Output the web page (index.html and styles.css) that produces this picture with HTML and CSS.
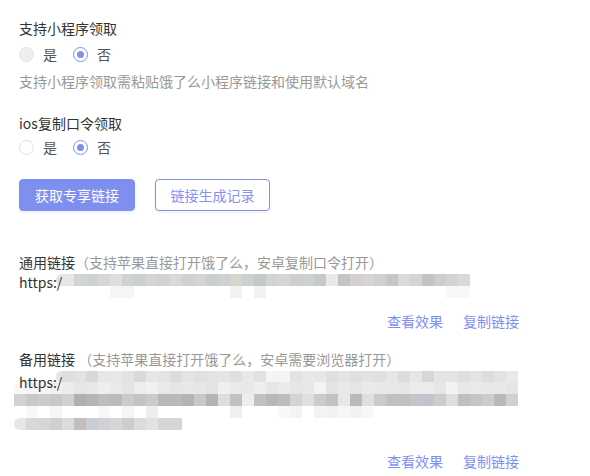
FILE: index.html
```html
<!DOCTYPE html>
<html lang="zh-CN">
<head>
    <meta charset="UTF-8">
    <meta name="viewport" content="width=device-width, initial-scale=1.0">
    <title>专享链接</title>
    <link rel="stylesheet" href="styles.css">
</head>
<body>
    <div class="page">
        <div class="field">
            <div class="field-label">支持小程序领取</div>
            <div class="radio-group">
                <label class="radio is-disabled"><span class="radio-dot"></span><span class="radio-text">是</span></label>
                <label class="radio is-checked"><span class="radio-dot"></span><span class="radio-text">否</span></label>
            </div>
            <div class="field-tip">支持小程序领取需粘贴饿了么小程序链接和使用默认域名</div>
        </div>

        <div class="field field-ios">
            <div class="field-label">ios复制口令领取</div>
            <div class="radio-group">
                <label class="radio"><span class="radio-dot"></span><span class="radio-text">是</span></label>
                <label class="radio is-checked"><span class="radio-dot"></span><span class="radio-text">否</span></label>
            </div>
        </div>

        <div class="actions">
            <button class="btn btn-primary">获取专享链接</button>
            <button class="btn btn-plain">链接生成记录</button>
        </div>

        <div class="link-block link-general">
            <div class="link-title">通用链接<span class="link-note">（支持苹果直接打开饿了么，安卓复制口令打开）</span></div>
            <div class="link-url">
                <span class="url-head">https:/</span>
                <div class="mask">
                    <div class="mask-row row-a"></div>
                    <div class="mask-row row-b"></div>
                </div>
            </div>
            <div class="link-ops"><a href="#">查看效果</a><a href="#">复制链接</a></div>
        </div>

        <div class="link-block link-backup">
            <div class="link-title">备用链接 <span class="link-note">（支持苹果直接打开饿了么，安卓需要浏览器打开）</span></div>
            <div class="link-url">
                <span class="url-head">https:/</span>
                <div class="mask">
                    <div class="mask-row row-1"></div>
                    <div class="mask-row row-2"></div>
                    <div class="mask-row row-3"></div>
                    <div class="mask-row row-4"></div>
                    <div class="mask-row row-5"></div>
                </div>
            </div>
            <div class="link-ops"><a href="#">查看效果</a><a href="#">复制链接</a></div>
        </div>
    </div>
</body>
</html>
```

FILE: styles.css
```css
:root {
    --primary: #7f8ff0;
    --text: #333333;
    --text-regular: #555555;
    --text-light: #999999;
    --border: #dcdfe6;
}

body {
    margin: 0;
    background: #ffffff;
    color: var(--text);
    font-family: "Noto Sans CJK SC", "Microsoft YaHei", sans-serif;
    font-size: 14px;
    line-height: 20px;
}

.page {
    width: 500px;
    padding: 18px 19px 0;
}

.field-label {
    height: 20px;
}

.radio-group {
    display: flex;
    align-items: center;
    height: 20px;
    margin-top: 6px;
}

.field-ios {
    margin-top: 22px;
}

.field-ios .radio-group {
    margin-top: 4px;
}

.radio {
    display: flex;
    align-items: center;
    margin-right: 16px;
    cursor: pointer;
}

.radio-dot {
    box-sizing: border-box;
    width: 15px;
    height: 15px;
    border: 1px solid var(--border);
    border-radius: 50%;
    background: #ffffff;
    margin-right: 9px;
    display: flex;
    align-items: center;
    justify-content: center;
}

.radio-text {
    color: var(--text-regular);
}

.radio.is-disabled .radio-dot {
    background: #efefef;
    border-color: #e2e2e2;
}

.radio.is-checked .radio-dot {
    border-color: var(--primary);
}

.radio.is-checked .radio-dot::after {
    content: "";
    width: 7px;
    height: 7px;
    border-radius: 50%;
    background: var(--primary);
}

.field-tip {
    margin-top: 7px;
    color: var(--text-light);
}

.actions {
    display: flex;
    gap: 20px;
    margin-top: 22px;
}

.btn {
    box-sizing: border-box;
    height: 32px;
    width: 116px;
    border-radius: 4px;
    border: 1px solid var(--primary);
    font-family: inherit;
    font-size: 14px;
    line-height: 30px;
    padding: 0;
    cursor: pointer;
    box-shadow: 0 2px 3px rgba(0, 0, 0, 0.06);
}

.btn-primary {
    background: var(--primary);
    color: #ffffff;
}

.btn-plain {
    width: 115px;
    background: #ffffff;
    color: #8592ef;
}

.link-general {
    margin-top: 41px;
}

.link-backup {
    margin-top: 18px;
}

.link-note {
    color: var(--text-light);
}

.link-url {
    position: relative;
    height: 20px;
    color: var(--text);
}

.link-backup .link-url {
    height: 60px;
    margin-top: 3px;
}

.url-head {
    position: relative;
    z-index: 1;
}

/* 打码遮罩 */
.mask {
    position: absolute;
    left: 0;
    top: 2px;
    width: 500px;
}

.link-backup .mask {
    top: -1px;
}

.mask-row {
    height: 12px;
}

.row-a {
    margin-left: 37px;
    width: 414px;
    border-radius: 6px 0 0 6px;
    background: linear-gradient(to right,
        #e2e2e2 0 6px, #e6e6e6 6px 18px, #d3d3d3 18px 30px, #cdd2d4 30px 42px,
        #d6d6d6 42px 54px, #dcdedf 54px 66px, #d2d2d2 66px 78px, #cbd0d2 78px 90px,
        #d5d5d5 90px 102px, #cfd3d5 102px 114px, #d9d9d9 114px 126px, #cfd2d3 126px 138px,
        #d4d4d4 138px 150px, #c9ced0 150px 162px, #d0d0d0 162px 174px, #d6d6cf 174px 186px,
        #cbd1d3 186px 198px, #c4cacc 198px 210px, #d3d3d3 210px 222px, #d6d6d6 222px 234px,
        #cfcdcf 234px 246px, #ced1d2 246px 258px, #c6c9ca 258px 270px, #e7e9eb 270px 282px,
        #c4c4c4 282px 294px, #d4d0d0 294px 306px, #d6d3d3 306px 318px, #d2cfd2 318px 330px,
        #c6c6c6 330px 342px, #d9dadc 342px 354px, #d4d4d1 354px 366px, #c4c4c4 366px 378px,
        #cdcdcd 378px 390px, #d3d3d3 390px 402px, #d9d9d9 402px 414px);
}

.row-b {
    margin-left: 91px;
    width: 360px;
    background: linear-gradient(to right,
        #f5f5f5 0 24px, transparent 24px 120px, #f2f2f0 120px 132px,
        transparent 132px 144px, #f2f2f0 144px 156px, transparent 156px 336px,
        #f6f7f7 336px 360px);
}

.row-1 {
    height: 11px;
    margin-left: 37px;
    width: 462px;
    border-radius: 6px 0 0 6px;
    background: linear-gradient(to right,
        #e4e4e4 0 6px, #dedede 6px 18px, #e2e2e2 18px 30px, #d8d8d8 30px 42px,
        #e6e6e6 42px 54px, #e8e8e8 54px 66px, #e3e3e3 66px 78px, #d9d9d9 78px 90px,
        #e6e6e6 90px 102px, #e4e4e4 102px 114px, #dcdcdc 114px 126px, #e4e4e4 126px 138px,
        #e0e0e0 138px 150px, #e3e3e3 150px 162px, #e5e5e3 162px 174px, #dedfe0 174px 186px,
        #e8e8e8 186px 198px, #e2e2e2 198px 210px, #f4f4f4 210px 234px, #e3e3e3 234px 246px,
        #e8e8e8 246px 258px, #e6e6e6 258px 270px, #dfdfe0 270px 282px, #e4e4e4 282px 294px,
        #e0dfde 294px 306px, #e2e2e2 306px 318px, #e0dfe0 318px 330px, #e6e6e6 330px 342px,
        #dcdcdc 342px 354px, #e6e6e6 354px 366px, #d6d6d6 366px 378px, #e4e4e4 378px 390px,
        #e6e4e3 390px 402px, #dedfe2 402px 414px, #e6e4e2 414px 426px, #dcdde0 426px 438px,
        #e2e3e4 438px 450px, #e9e9e9 450px 462px);
}

.row-2 {
    margin-left: -5px;
    width: 504px;
    border-radius: 6px 0 0 0;
    background: linear-gradient(to right,
        rgba(240, 240, 240, 0.5) 0 12px, rgba(236, 236, 236, 0.5) 12px 24px,
        rgba(236, 236, 236, 0.5) 24px 36px, rgba(232, 232, 232, 0.6) 36px 48px,
        #ececec 48px 60px, #e6e6e6 60px 72px, #e8e8ea 72px 84px, #eeeeee 84px 96px,
        #eaeaea 96px 108px, #e4e4e4 108px 120px, #ededed 120px 132px, #f0f0f0 132px 144px,
        #e9e9e9 144px 156px, #e6e6e6 156px 168px, #e8e8e8 168px 180px, #e6e6e6 180px 192px,
        #e3e3e3 192px 204px, #f0f0f0 204px 216px, #eaeaea 216px 228px, #e8e8e6 228px 240px,
        #eeeeee 240px 252px, #e6e6e8 252px 264px, #eaeaea 264px 276px, #e6e6e6 276px 288px,
        #e8e8e8 288px 300px, #f3f3f0 300px 312px, #e4e4e6 312px 324px, #e8e8e8 324px 336px,
        #e6e4e4 336px 348px, #eaeaea 348px 360px, #e8e8e8 360px 372px, #e8e8e8 372px 384px,
        #e6e6e6 384px 396px, #ececec 396px 408px, #ebebeb 408px 420px, #e6e6e6 420px 432px,
        #f2f2f2 432px 444px, #e8e8e8 444px 456px, #eaeaea 456px 468px, #eae8e6 468px 480px,
        #e6e8ea 480px 492px, #e4e6e6 492px 504px);
}

.row-3 {
    margin-left: -5px;
    width: 504px;
    background: linear-gradient(to right,
        #d2d2d2 0 12px, #c8c8c8 12px 24px, #cbcccc 24px 36px, #c8c8c8 36px 48px,
        #d1d1d1 48px 60px, #b0b0b0 60px 72px, #b2b8ba 72px 84px, #c2bcb8 84px 96px,
        #b8bcc2 96px 108px, #c8cccb 108px 120px, #c4c4c4 120px 132px, #cbcbcb 132px 144px,
        #b8b8b8 144px 156px, #bcb8b8 156px 168px, #b4b4b4 168px 180px, #c8c8c8 180px 192px,
        #b4b4b4 192px 204px, #dcdde0 204px 216px, #c4c0bf 216px 228px, #ededed 228px 240px,
        #c3bfc3 240px 252px, #b8b8b8 252px 264px, #bdbdbd 264px 276px, #d4d4d6 276px 288px,
        #e2dfe0 288px 300px, #cacbcd 300px 312px, #c0c4c0 312px 324px, #e8e8e6 324px 336px,
        #bcb8bc 336px 348px, #dce0e2 348px 360px, #cccac6 360px 372px, #c4bfc4 372px 384px,
        #c4c0bc 384px 396px, #c1c6cc 396px 408px, #c6c2c8 408px 420px, #cccccc 420px 432px,
        #dedede 432px 444px, #bfbfc1 444px 456px, #c4c6c6 456px 468px, #cccccc 468px 480px,
        #b8baba 480px 492px, #d0d0d0 492px 504px);
}

.row-4 {
    margin-left: -5px;
    width: 360px;
    background: linear-gradient(to right,
        transparent 0 12px, #f8f8f8 12px 24px, transparent 24px 36px, #f6f6f6 36px 48px,
        transparent 48px 84px, #f8f8f8 84px 96px, transparent 96px 108px, #f5f5f5 108px 120px,
        transparent 120px 132px, #eeeeee 132px 144px, transparent 144px 216px,
        #f0f0f0 216px 228px, transparent 228px 264px, #f8f8f8 264px 276px, #f4f4f4 276px 288px,
        transparent 288px 300px, #f4f4f4 300px 312px, #f2f2f2 312px 324px, #f6f6f6 324px 336px,
        #f2f2f0 336px 348px, #f8f8f8 348px 360px);
}

.row-5 {
    margin-left: -5px;
    width: 168px;
    border-radius: 6px 0 0 6px;
    background: linear-gradient(to right,
        #e6e6e6 0 12px, #d8d8d8 12px 24px, #d6d6d6 24px 36px, #d0d0d0 36px 48px,
        #dcdcdc 48px 60px, #c4bebe 60px 72px, #ccccd4 72px 84px, #d2d2d6 84px 96px,
        #d6d6d6 96px 108px, #cdcdcd 108px 120px, #dcdcdc 120px 132px, #e2e2e4 132px 144px,
        #d6d6d6 144px 156px, #d6d6d6 156px 168px);
}

.link-ops {
    display: flex;
    justify-content: flex-end;
    gap: 20px;
    margin-top: 19px;
}

.link-ops a {
    color: var(--primary);
    text-decoration: none;
}
```
